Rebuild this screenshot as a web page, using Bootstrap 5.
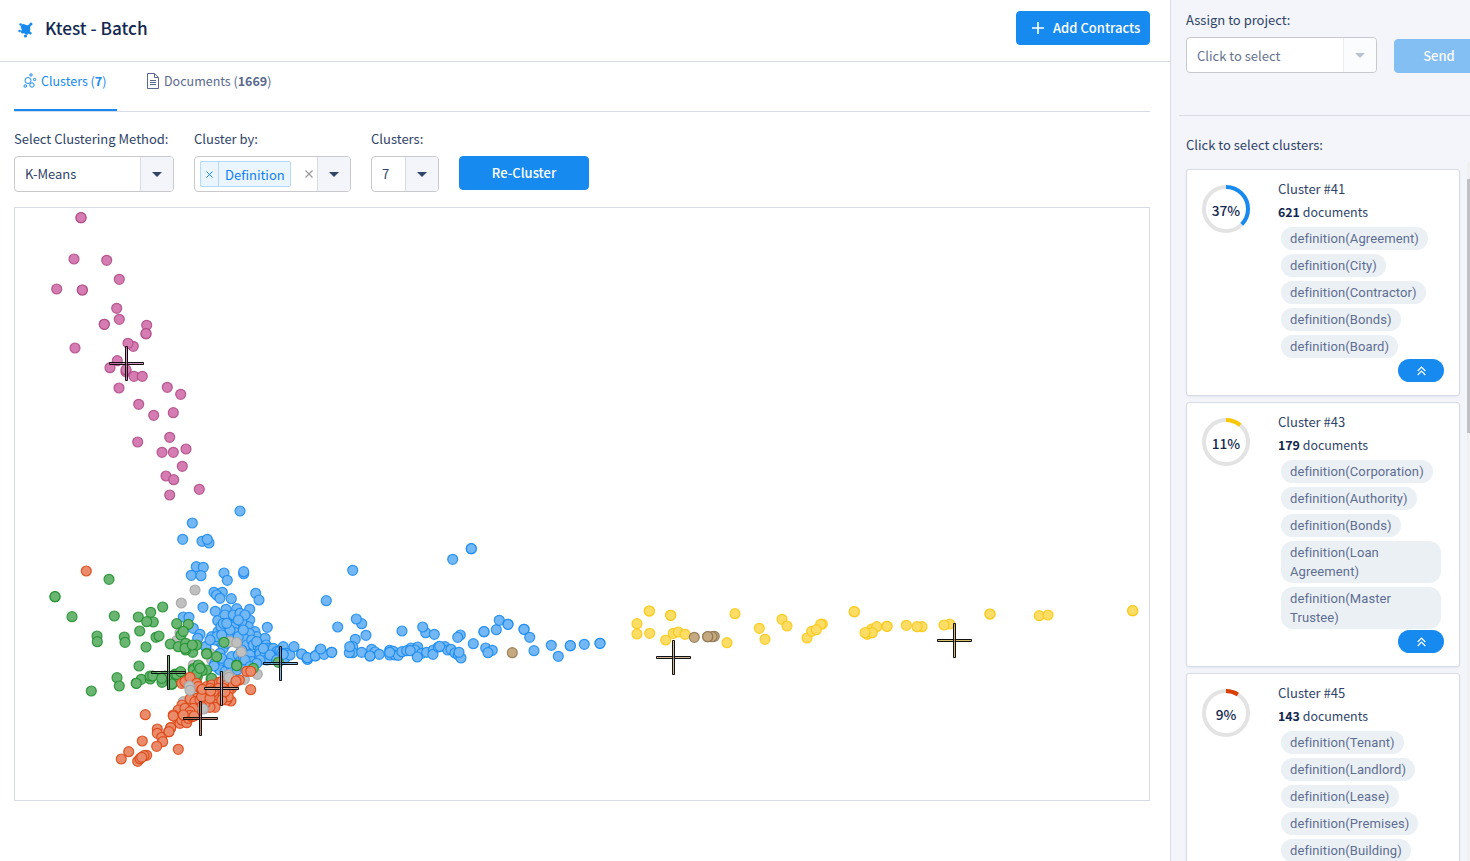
<!DOCTYPE html>
<html lang="en">
<head>
<meta charset="utf-8">
<title>Ktest - Batch</title>
<link href="https://cdn.jsdelivr.net/npm/bootstrap@5.3.0/dist/css/bootstrap.min.css" rel="stylesheet">
<style>
:root{--brand:#178aef;--ink:#2f4468;--dark:#14284f;--line:#d9dbe6;--side:#f4f5fa}
body{font-family:"Noto Sans CJK SC","Source Sans Pro",sans-serif;font-size:13px;line-height:20px;color:var(--ink);height:861px;overflow:hidden;background:#fff}
.main-pane{width:1170px}
.top-bar{height:62px;border-bottom:1px solid var(--line);padding:0 20px 5px 18px}
.page-title{font-size:17.2px;font-weight:500;color:var(--dark);line-height:24px}
.btn-brand{--bs-btn-bg:#178aef;--bs-btn-color:#fff;--bs-btn-border-color:#178aef;--bs-btn-disabled-bg:#178aef;--bs-btn-disabled-color:#fff;--bs-btn-disabled-border-color:#178aef;--bs-btn-disabled-opacity:.5;font-size:13px;font-weight:500;line-height:20px;height:34px;border-radius:4px;padding:0;flex:none}
.tab-row{height:50px;margin:0 20px 0 14px;border-bottom:1px solid var(--line)}
.tab-row .nav-link{height:49px;padding:0 0 9px;color:#5a6a8e;font-size:12.5px;border-bottom:2px solid transparent}
.tab-row .nav-link.active{color:var(--brand);border-color:var(--brand);width:103px;padding-left:9px}
.pick{height:36px;border:1px solid #c9c9cd;border-radius:4px;background:#fff;overflow:hidden}
.pick-arrow{width:33px;background:var(--side);border-left:1px solid var(--line);flex:none}
.tag{height:26px;border:1px solid #b5d9fb;background:#ebf5ff;color:#0f80f5;border-radius:2px;margin-left:5px}
.tag-x{width:18px;border-right:1px solid #b5d9fb}
.chart{margin:15px 20px 0 14px;height:594px;border:1px solid var(--line)}
.side-pane{width:300px;background:var(--side);border-left:1px solid var(--line);overflow:hidden}
.split{height:1px;background:var(--line);margin-left:8px}
.cluster{width:274px;border:1px solid #d6dce7;border-radius:3px;background:#fff;box-shadow:0 1px 2px rgba(60,80,120,.08)}
.donut{width:48px;height:48px;margin:15px 28px 0 15px;flex:none}
.donut-label{font-size:13.7px;font-weight:500;color:var(--dark);top:1px}
.docs{font-size:12.4px}
.docs b{color:var(--dark)}
.pill{font-family:Roboto,sans-serif;font-size:13px;line-height:19px;color:#5e6e91;background:#ebf0f5;border-radius:12px;padding:2px 9px;max-width:160px;letter-spacing:.1px}
.fold{width:46px;height:23px;border-radius:12px;background:var(--brand);margin-right:15px}
.bar-track{left:1467px;top:162px;width:3px;height:699px;background:#f0f0f1}
.bar-thumb{margin-top:17px;height:254px;background:#c1c1c3}
</style>
</head>
<body class="d-flex">
<main class="main-pane flex-shrink-0">
  <header class="top-bar d-flex align-items-center">
    <svg width="16" height="16" viewBox="0 0 16 16" fill="#178aef" class="mt-1"><path d="M3.5 3Q5 1.2 7 2.5Q9 4 10.5 2.8L12 2l1 1.4-1 1.8q.8 2-.2 3.6l1 2-1.8.8q-1.3 1.8-3.2.8Q6 10.800 5 11.500Q2.500 12 3 9Q4.500 7.500 3.300 6.500Q1.800 5 3.500 3Z"/><circle cx="2.600" cy="2.500" r="1.300"/><circle cx="13" cy="2" r="1.500"/><circle cx="1.600" cy="9" r="1.300"/><circle cx="12.400" cy="11.200" r="1.200"/><circle cx="7.500" cy="14" r="1.600"/></svg>
    <h1 class="page-title mb-0" style="margin-left:11px">Ktest - Batch</h1>
    <button class="btn btn-brand ms-auto d-flex align-items-center" style="width:134px;padding-left:14px"><svg width="14" height="14" viewBox="0 0 14 14" stroke="#fff" stroke-width="1.600"><path d="M1 7h12M7 1v12"/></svg><span style="margin-left:8px">Add Contracts</span></button>
  </header>
  <nav class="tab-row nav flex-nowrap">
    <a class="nav-link active d-flex align-items-center"><svg width="14" height="16" viewBox="0 0 14 16" fill="none" stroke="#178aef"><circle cx="5" cy="7.500" r="3"/><circle cx="8" cy="2" r="1.200"/><circle cx="11.600" cy="6.500" r="1.200"/><circle cx="2.300" cy="13" r="1.300"/><circle cx="9" cy="12" r="2.200"/></svg><span style="margin-left:4px">Clusters (<b>7</b>)</span></a>
    <a class="nav-link d-flex align-items-center" style="margin-left:30px"><svg width="12" height="16" viewBox="0 0 12 16" fill="none" stroke="#5a6a8e"><path d="M.5.500h7l4 4v11H.500zM7.500.500v4h4M3 7.500h6M3 9.500h6M3 11.500h6"/></svg><span style="margin-left:5px">Documents (<b>1669</b>)</span></a>
  </nav>
  <section class="d-flex align-items-start" style="margin:17px 0 0 14px">
    <div style="width:180px"><div style="margin-bottom:7px">Select Clustering Method:</div>
      <div class="pick d-flex" style="width:160px"><span class="flex-grow-1 align-self-center" style="padding-left:10px">K-Means</span><span class="pick-arrow d-flex align-items-center justify-content-center"><svg width="10" height="5"><path d="M0 0h10L5 5z" fill="#2f4468"/></svg></span></div></div>
    <div style="width:177px"><div style="margin-bottom:7px">Cluster by:</div>
      <div class="pick d-flex align-items-center" style="width:157px"><span class="tag d-flex align-items-center"><span class="tag-x h-100 d-flex align-items-center justify-content-center"><svg width="7" height="7" viewBox="0 0 7 7" stroke="#178aef"><path d="M.5.500l6 6m0-6l-6 6"/></svg></span><span style="padding:1px 5px 0 6px">Definition</span></span><svg class="ms-auto" width="8" height="8" viewBox="0 0 8 8" stroke="#999" stroke-width="1.100" style="margin-right:4px"><path d="M.5.500l7 7m0-7l-7 7"/></svg><span class="pick-arrow h-100 d-flex align-items-center justify-content-center"><svg width="10" height="5"><path d="M0 0h10L5 5z" fill="#2f4468"/></svg></span></div></div>
    <div style="width:88px"><div style="margin-bottom:7px">Clusters:</div>
      <div class="pick d-flex" style="width:68px"><span class="flex-grow-1 align-self-center" style="padding-left:10px">7</span><span class="pick-arrow d-flex align-items-center justify-content-center"><svg width="10" height="5"><path d="M0 0h10L5 5z" fill="#2f4468"/></svg></span></div></div>
    <button class="btn btn-brand" style="width:130px;margin-top:27px">Re-Cluster</button>
  </section>
  <div class="chart"><svg id="plot" class="d-block" width="1134" height="592" viewBox="15 208 1134 592"></svg></div>
</main>
<aside class="side-pane flex-shrink-0">
  <div style="padding:10px 0 0 15px;height:115px">
    <div style="margin-bottom:7px">Assign to project:</div>
    <div class="d-flex flex-nowrap"><div class="pick d-flex flex-shrink-0" style="width:191px"><span class="flex-grow-1 align-self-center" style="padding:1px 0 0 10px;color:#66758f">Click to select</span><span class="pick-arrow d-flex align-items-center justify-content-center opacity-50" style="background:#f8f9fd"><svg width="10" height="5"><path d="M0 0h10L5 5z" fill="#7486a8"/></svg></span></div>
    <button class="btn btn-brand" disabled style="width:90px;margin:2px 0 0 17px">Send</button></div>
  </div>
  <div class="split"></div>
  <div style="padding:19px 0 14px 15px">Click to select clusters:</div>
  <div id="list" class="d-flex flex-column" style="padding-left:15px;gap:6px"></div>
</aside>
<div class="bar-track position-absolute"><div class="bar-thumb"></div></div>
<script src="https://cdn.jsdelivr.net/npm/bootstrap@5.3.0/dist/js/bootstrap.bundle.min.js"></script>
<script>
const clusters = [
  [41, 37, 621, '#178aef', ['Agreement','City','Contractor','Bonds','Board'], 227],
  [43, 11, 179, '#fac800', ['Corporation','Authority','Bonds','Loan Agreement','Master Trustee'], 265],
  [45, 9, 143, '#da3f07', ['Tenant','Landlord','Lease','Premises','Building'], 227]];
const arc = 2*Math.PI*22;
document.getElementById('list').innerHTML = clusters.map(([id,p,n,c,tags,h]) => `
<div class="cluster d-flex" style="height:${h}px">
  <div class="donut position-relative"><svg width="48" height="48" fill="none" stroke-width="4"><circle cx="24" cy="24" r="22" stroke="#e3e3e3"/><circle cx="24" cy="24" r="22" stroke="${c}" stroke-dasharray="${arc*p/100} ${arc}" transform="rotate(-90 24 24)"/></svg>
  <span class="donut-label position-absolute w-100 h-100 d-flex align-items-center justify-content-center">${p}%</span></div>
  <div class="flex-grow-1" style="padding-top:9px"><div>Cluster #${id}</div><div class="docs" style="margin-top:3px"><b>${n}</b> documents</div>
  <div class="d-flex flex-column align-items-start" style="gap:4px;margin:5px 0 0 3px">${tags.map(t=>`<span class="pill">definition(${t})</span>`).join('')}</div>
  <div class="fold ms-auto d-flex align-items-center justify-content-center" style="margin-top:1px"><svg width="9" height="10" viewBox="0 0 9 10" fill="none" stroke="#fff" stroke-width="1.200"><path d="M.7 5l3.800-3.800L8.300 5M.7 9l3.800-3.800L8.300 9"/></svg></div></div>
</div>`).join('');

const tone = {
  pink:['#d57cb2','#ae4a86'], blue:['#73b7f5','#178aef'], green:['#6bb573','#1d8f2b'],
  orange:['#ea8c6b','#da4310'], gray:['#c0c0c0','#a3a3a3'], yellow:['#fddd66','#fac80f'], tan:['#c5a981','#8f7750']};
let marks = '';
// Points are stored in thirds of a pixel, relative to the origin (ox, oy).
function plot(name, ox, oy, data){
  const [f,s] = tone[name];
  data.trim().split(/\s+/).forEach(d => {
    const [x,y] = d.split(',').map(Number);
    marks += `<circle cx="${(ox+x/3).toFixed(1)}" cy="${(oy+y/3).toFixed(1)}" r="5" fill="${f}" stroke="${s}" stroke-opacity=".85" stroke-width="1.200"/>`;
  });
}
function centre(x, y, c){
  marks += `<g fill="${c}" fill-opacity=".7" stroke="#111" stroke-width="1"><path d="M${x-17} ${y-1}h34v2h-34z"/><path d="M${x-1} ${y-17}h2v34h-2z"/></g>`;
}
plot('pink',30,200,`153,53 153,53 132,177 230,181 268,238 80,267 157,270 157,270 260,325 268,358 223,373 223,373 350,376 348,401 348,401 310,439 294,430 135,444 262,482 240,503 288,515 288,509 312,529 337,529 267,564 412,562 452,583 326,613 371,646 430,638 419,712 323,726 396,757 430,757 468,747 457,799 408,828 431,839 508,868 419,885`);
plot('gray',160,620,`105,-90 64,-51 50,62 100,135 155,120 60,38 150,100 90,195 70,245 135,265`);
plot('blue',160,620,`240,-327 97,-291 68,-242 126,-236 147,-231 142,-242 109,-160 130,-158 94,-134 123,-133 192,-141 202,-119 251,-139 251,-145 287,-80 297,-60 129,-38 70,-9 87,-8
162,-83 187,-83 170,-75 180,-65 214,-64 166,-26 198,-32 230,-34 269,-32 173,2 200,5 232,-8 269,0 322,22
100,25 120,43 113,55 155,50 174,35 193,45 215,17 240,20 222,20 265,20 285,35 290,50 268,40 255,57 315,55 318,75
138,80 137,80 180,65 190,85 180,100 165,130 175,145 190,125 215,110 235,105 240,125 250,110 262,100 260,75 245,90 215,60 200,70 185,115 205,140 180,150 195,155 215,145 232,150 250,140 207,130 162,138
275,60 280,75 295,80 290,65 300,90 283,110 270,105 300,100 315,105 325,85 330,95 340,85 350,95 345,105 335,110 320,120 300,120 275,125 290,130 360,92 355,115 370,80 365,100 375,115 380,100 390,105 402,80 425,102 443,117 440,113 466,107 480,90 255,120 270,140 310,85 330,105 350,120 370,103
225,38 205,50 235,50 183,20 245,5 250,30 195,-15 220,-15 240,-20 255,-15 190,10 210,30 165,60 170,50 150,60 185,45 200,10 235,0`);
plot('blue',300,530,`514,56 514,56 458,88 158,121 79,212 113,291 185,281 169,267 198,316 306,303 377,308 368,291 403,313 481,315 473,322 520,341 552,305 552,305 589,299 598,271 624,283 624,283 672,298 672,298 689,322 702,362 754,346 775,379 811,347 811,347 853,343 900,340 900,340
5,372 22,388 22,383 46,378 72,373 62,357 95,367 95,367 166,328 158,350 158,368 148,368 149,350 185,367 215,358 225,366 210,378 238,373 210,378 269,361 280,364 269,375 285,375 295,376 306,365 269,367 320,362 333,354 353,351 345,360 331,362 365,370 352,381 380,367 400,360 399,373 415,351 435,350 443,360 419,349 453,358 465,369 475,375 483,384 477,367 557,354 577,361 564,368`);
plot('gray',160,620,`210,65 230,68 244,96 292,163 253,178 215,175 205,165`);
plot('green',40,490,`207,268 45,320 45,320 96,380 223,378 295,381 332,367 368,351 340,396 320,395 299,423 348,442 357,438 171,438 172,455 253,441 255,457 318,471 297,528 231,563 238,588 154,603 289,580 304,568 289,580 331,567 330,558 338,558 366,577 375,558 395,565 396,583 405,552 422,548 422,558 391,462 410,401 445,403 423,435 430,424 415,470 437,460 458,487 437,480 435,475 470,465 457,465 460,536 480,530 472,560`);
plot('green',160,620,`5,175 35,192 50,163 62,155 140,100 140,102 170,110 192,67 230,135 230,137 100,150 115,135 140,150 126,152 110,162 153,178 155,175 120,145 280,145 355,127`);
plot('gray',160,620,`208,176 90,195 92,213 100,215 135,260`);
plot('orange',40,490,`139,243 316,674 352,717 352,730 365,742 368,755 350,769 307,753 266,785 244,807 415,778 293,814 320,796 312,797 300,806 305,802 386,725 392,713`);
plot('orange',160,620,`260,154 272,154 272,209 65,190 75,185 90,172 110,190 115,200 125,210 140,200 155,195 165,210 178,187 185,185 200,195 215,205 205,215 190,205 220,195 228,183 238,180 213,243 200,240 180,235 160,240 150,220 130,215 110,235 90,237 105,245 120,240 145,250 165,262 150,262 135,250 66,255 55,270 40,285 50,295 60,310 65,300 80,308 85,295 70,285 95,290 100,285 110,275 115,265 125,260 75,265 100,265 90,275 170,225 190,225 205,230 175,205 150,205 32,323 27,335 160,215 125,230 150,235 185,240 195,215`);
plot('gray',160,620,`88,198 90,211 130,267 207,172`);
plot('orange',160,620,`90,286 40,288 70,285 102,288 127,208 152,213 228,183`);
plot('yellow',620,590,`88,63 88,63 152,76 152,76 51,101 51,132 89,130 137,150 160,130 175,126 195,133 345,71 321,158 418,115 435,148 486,88 501,108 607,102 602,103 561,144 575,124 589,119 703,65 703,65 742,133 755,117 770,110 757,128 735,128 801,109 801,109 859,106 906,110 891,110 989,102 972,105 1110,72 1110,72 1258,77 1284,75 1538,62 1538,62`);
plot('tan',620,590,`223,142 283,139 276,140 263,140 263,140`);
plot('tan',300,530,`637,368`);
centre(126.500,363.500,'#c565a0'); centre(168.500,672.500,'#4d9c55'); centre(221.500,688.500,'#c0c0c0');
centre(200.500,718.500,'#b25538'); centre(280.500,663.500,'#4f94d6'); centre(673.500,657.500,'#b79a74'); centre(954.500,640.500,'#c5a52c');
document.getElementById('plot').innerHTML = marks;
</script>
</body>
</html>
